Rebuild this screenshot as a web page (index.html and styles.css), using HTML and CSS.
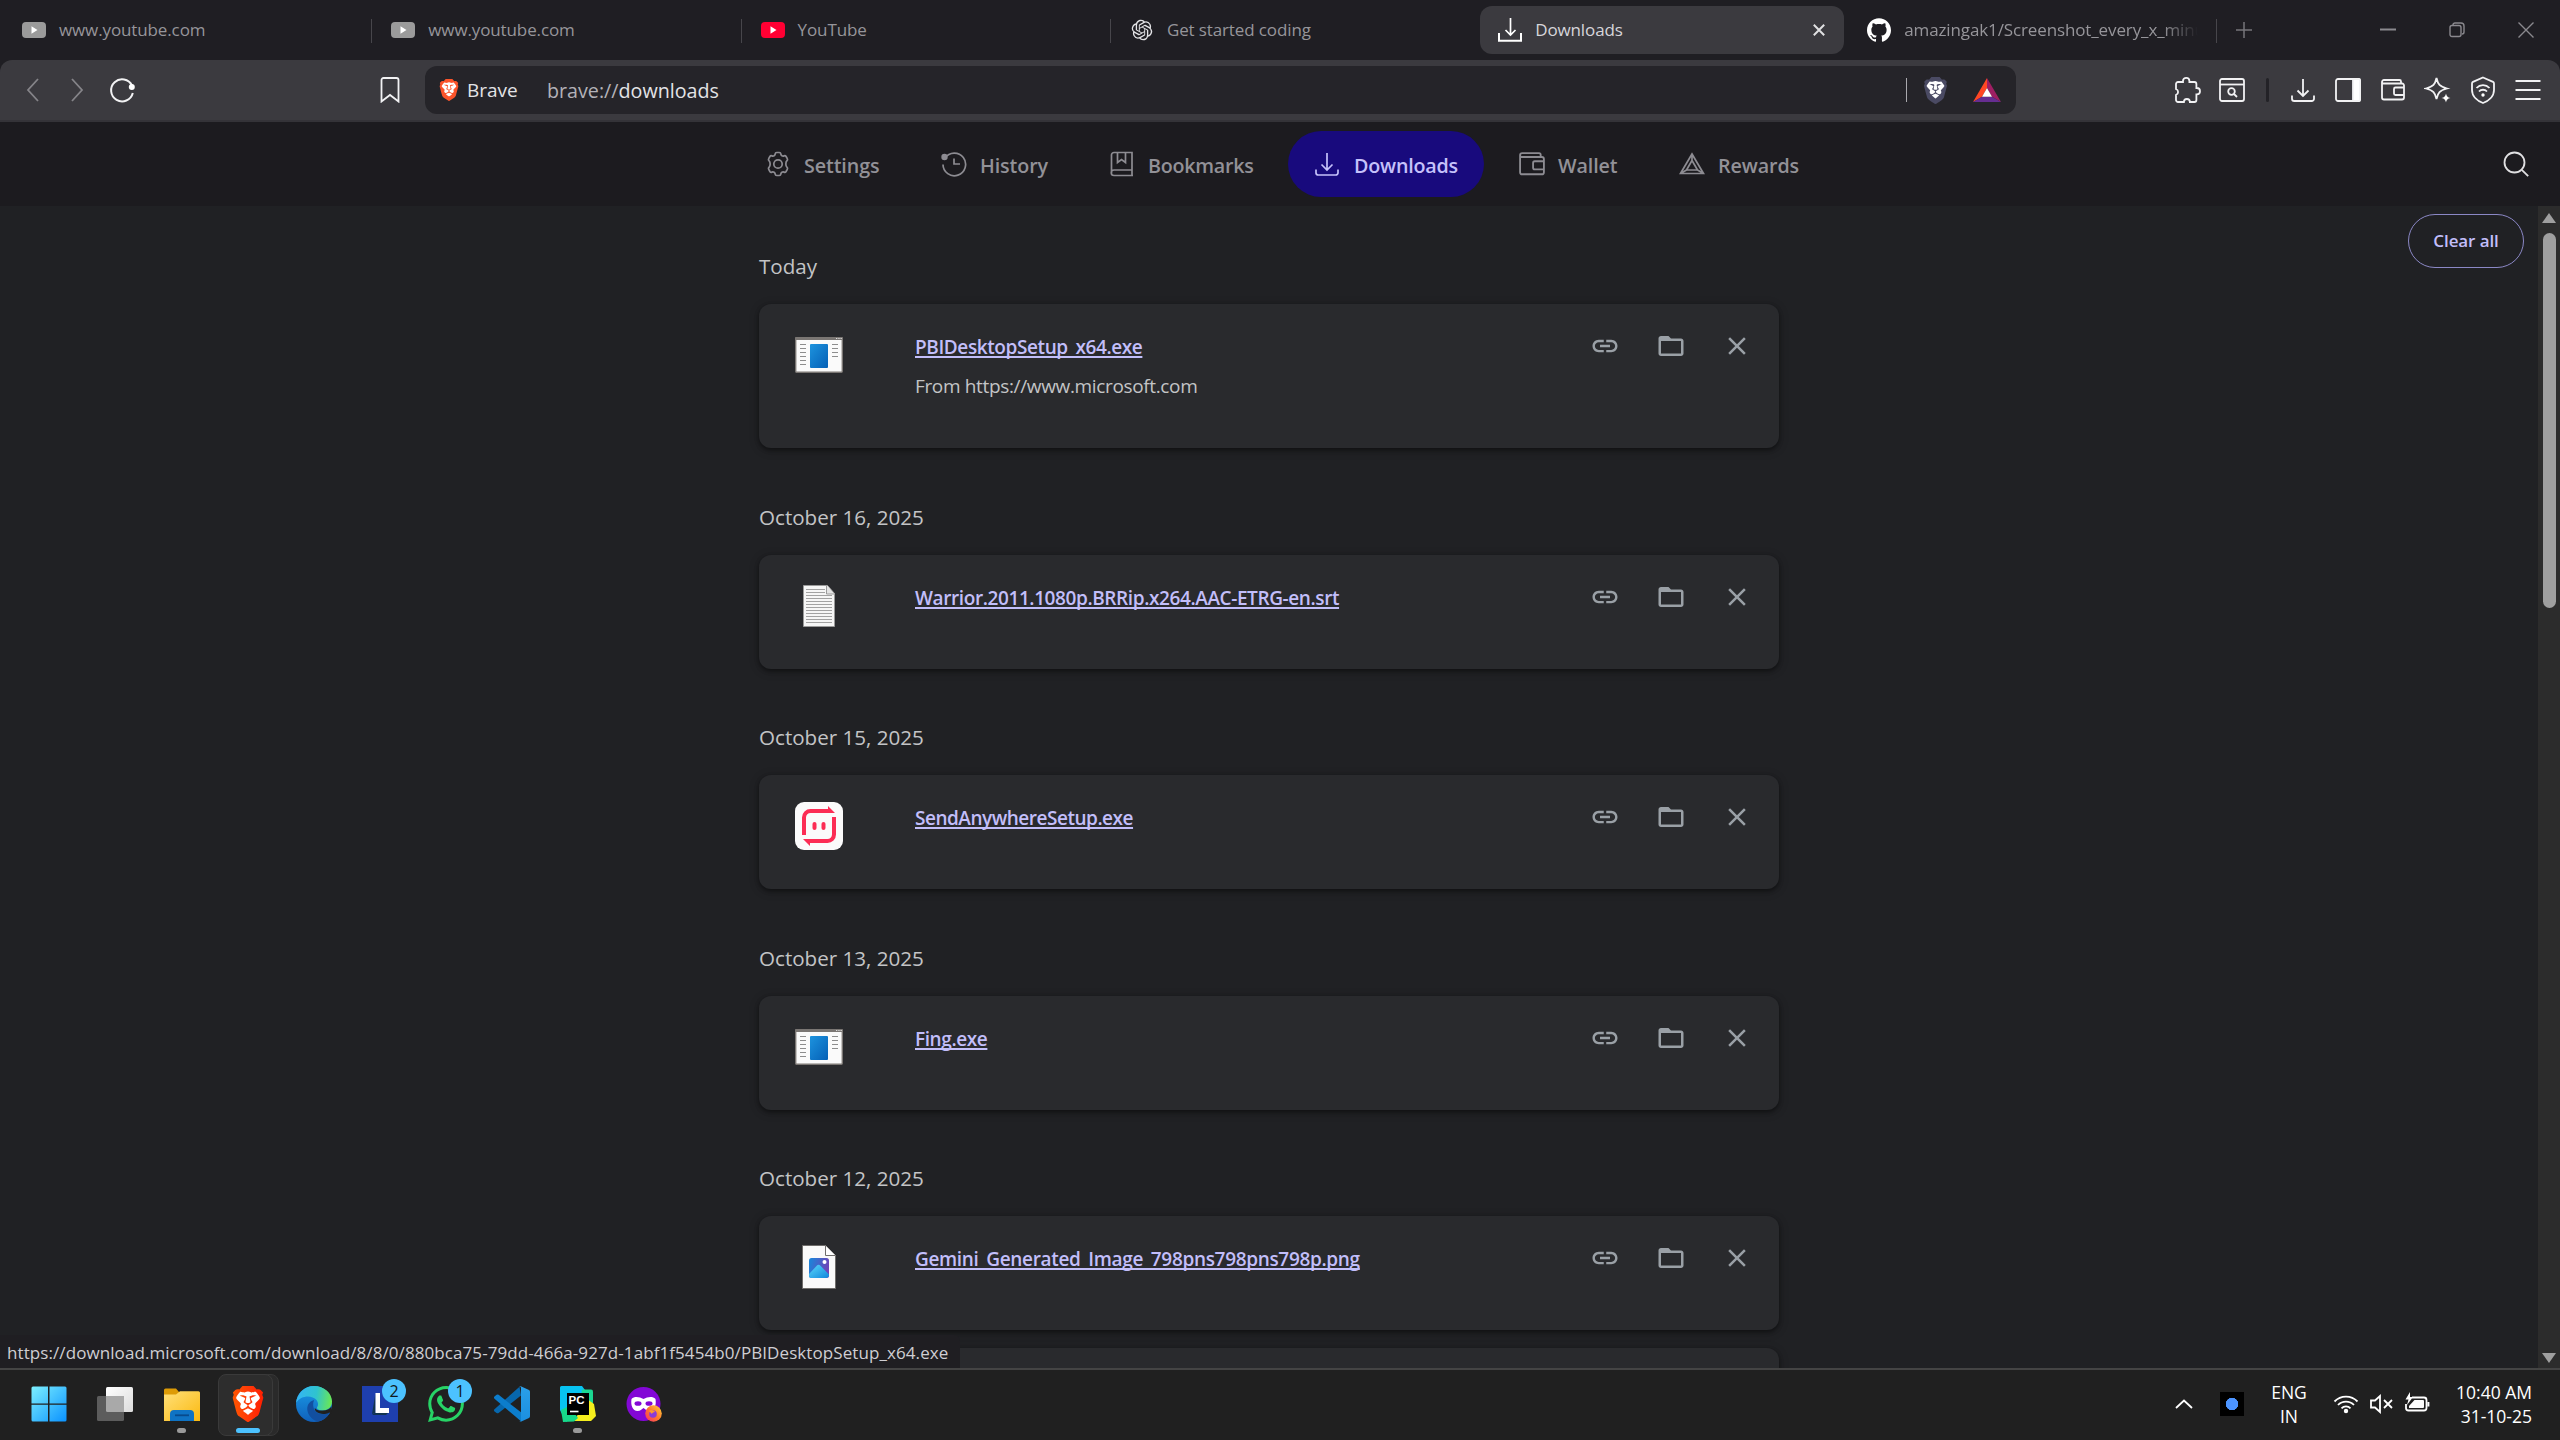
FILE: index.html
```html
<!DOCTYPE html>
<html lang="en">
<head>
<meta charset="utf-8">
<title>Downloads</title>
<link rel="stylesheet" href="styles.css">
</head>
<body>
<svg class="defs" width="0" height="0" aria-hidden="true">
  <defs>
    <linearGradient id="g-exe" x1="0" y1="0" x2="1" y2="1"><stop offset="0" stop-color="#1d93de"/><stop offset="1" stop-color="#0560b6"/></linearGradient>
    <linearGradient id="g-win" x1="0" y1="0" x2="1" y2="1"><stop offset="0" stop-color="#7df0ff"/><stop offset="1" stop-color="#0a92ff"/></linearGradient>
    <linearGradient id="g-tv" x1="0" y1="0" x2="1" y2="1"><stop offset="0" stop-color="#fff"/><stop offset="1" stop-color="#dcdcdc"/></linearGradient>
    <linearGradient id="g-folder" x1="0" y1="0" x2="1" y2="1"><stop offset="0" stop-color="#ffe07a"/><stop offset="1" stop-color="#fbb90f"/></linearGradient>
    <linearGradient id="g-brave" x1="0" y1="0" x2="1" y2="0"><stop offset="0" stop-color="#ff5601"/><stop offset=".6" stop-color="#ff3508"/><stop offset="1" stop-color="#ff1e00"/></linearGradient>
    <linearGradient id="g-edge1" x1="0" y1=".4" x2="1" y2=".5"><stop offset="0" stop-color="#35b5f5"/><stop offset=".55" stop-color="#2fc3cf"/><stop offset="1" stop-color="#6be852"/></linearGradient>
    <linearGradient id="g-edge2" x1="0" y1="0" x2="0" y2="1"><stop offset="0" stop-color="#1a9de8"/><stop offset="1" stop-color="#1060bb"/></linearGradient>
    <linearGradient id="g-img" x1="0" y1="0" x2="1" y2=".3"><stop offset="0" stop-color="#1688dc"/><stop offset="1" stop-color="#6d45b8"/></linearGradient>
    <linearGradient id="g-mtn" x1="0" y1="0" x2="1" y2="1"><stop offset="0" stop-color="#5ad7fa"/><stop offset="1" stop-color="#0f86dc"/></linearGradient>
    <linearGradient id="g-ff" x1="1" y1="0" x2="0" y2="1"><stop offset="0" stop-color="#ffd43a"/><stop offset=".5" stop-color="#ff7a2c"/><stop offset="1" stop-color="#f5286e"/></linearGradient>
    <linearGradient id="g-vs" x1="0" y1="0" x2="0" y2="1"><stop offset="0" stop-color="#2a9fe8"/><stop offset="1" stop-color="#1b8fe0"/></linearGradient>

    <symbol id="shield" viewBox="0 0 24 24"><path d="M15.68 0l2.096 2.38s1.84-.512 2.709.358c.868.87 1.584 1.638 1.584 1.638l-.562 1.381.715 2.047s-2.104 7.98-2.35 8.955c-.486 1.919-.818 2.66-2.198 3.633-1.38.972-3.884 2.66-4.293 2.916-.409.256-.92.692-1.38.692-.46 0-.97-.436-1.38-.692a185.796 185.796 0 01-4.293-2.916c-1.38-.973-1.712-1.714-2.197-3.633-.247-.975-2.351-8.955-2.351-8.955l.715-2.047-.562-1.381s.716-.768 1.585-1.638c.868-.87 2.708-.358 2.708-.358L8.321 0z"/><path fill="#fff" d="M12.001 14.936c-.14 0-1.038.317-1.758.69-.72.373-1.242.637-1.409.742-.167.104-.065.301.087.409.152.107 2.194 1.69 2.393 1.866.198.175.489.464.687.464.198 0 .49-.29.688-.464.198-.175 2.24-1.759 2.392-1.866.152-.108.254-.305.087-.41-.167-.104-.689-.368-1.41-.741-.72-.373-1.617-.69-1.757-.69zm0-11.278s-.409.001-1.022.206-1.278.46-1.584.46c-.307 0-2.581-.434-2.581-.434S4.119 7.152 4.119 7.849c0 .697.339.881.68 1.243l2.02 2.149c.192.203.59.511.356 1.066-.235.555-.58 1.26-.196 1.977.384.716 1.042 1.194 1.464 1.115.421-.08 1.412-.598 1.776-.834.364-.237 1.518-1.19 1.518-1.554 0-.365-1.193-1.02-1.413-1.168-.22-.15-1.226-.725-1.247-.95-.02-.227-.012-.293.284-.851.297-.559.831-1.304.742-1.8-.089-.495-.95-.753-1.565-.986-.615-.232-1.799-.671-1.947-.74-.148-.068-.11-.133.339-.175.448-.043 1.719-.212 2.292-.052.573.16 1.552.403 1.632.532.079.13.149.134.067.579-.081.445-.5 2.581-.541 2.96-.04.38-.12.63.288.724.409.094 1.097.256 1.333.256s.924-.162 1.333-.256c.408-.093.329-.344.288-.723-.04-.38-.46-2.516-.541-2.961-.082-.445-.012-.45.067-.579.08-.129 1.059-.372 1.632-.532.573-.16 1.845.009 2.292.052.449.042.487.107.339.175-.148.069-1.332.508-1.947.74-.615.233-1.476.49-1.565.986-.09.496.445 1.241.742 1.8.297.558.304.624.284.85-.02.226-1.026.802-1.247.95-.22.15-1.413.804-1.413 1.169 0 .364 1.154 1.317 1.518 1.554.364.236 1.355.755 1.776.834.422.079 1.08-.4 1.464-1.115.384-.716.039-1.422-.195-1.977-.235-.555.163-.863.355-1.066l2.02-2.149c.341-.362.68-.546.68-1.243 0-.697-2.695-3.96-2.695-3.96s-2.274.436-2.58.436c-.307 0-.972-.256-1.585-.461-.613-.205-1.022-.206-1.022-.206z"/></symbol>
    <symbol id="tube" viewBox="0 0 24 24"><rect x="0" y="4" width="24" height="16" rx="4"/><path d="M9.5 8.3v7.4l6-3.7z" fill="#fff"/></symbol>
    <symbol id="tray" viewBox="0 0 24 24"><path d="M12 1v17M6.5 12.5L12 18l5.5-5.5M1 17.500v3.200a2.300 2.300 0 0 0 2.300 2.300h17.400a2.300 2.300 0 0 0 2.300-2.300v-3.200"/></symbol>
    <symbol id="wallet" viewBox="0 0 24 24"><path d="M1 4v15.500a2 2 0 0 0 2 2h18a2 2 0 0 0 2-2V7.500a2 2 0 0 0-2-2H2.500A1.500 1.500 0 0 1 1 4a2 2 0 0 1 2-2h15.500a1.500 1.500 0 0 1 1.500 1.500v2M23 9.500h-8.500a1.500 1.500 0 0 0-1.500 1.500v4.500a1.500 1.500 0 0 0 1.500 1.500H23"/></symbol>
    <symbol id="link" viewBox="0 0 24 24"><path d="M3.900 12c0-1.710 1.390-3.100 3.100-3.100h4V7H7c-2.760 0-5 2.240-5 5s2.240 5 5 5h4v-1.900H7c-1.710 0-3.100-1.390-3.100-3.100zM8 13h8v-2H8v2zm9-6h-4v1.900h4c1.710 0 3.100 1.390 3.100 3.100s-1.390 3.100-3.100 3.100h-4V17h4c2.760 0 5-2.240 5-5s-2.240-5-5-5z"/></symbol>
    <symbol id="folder" viewBox="0 0 24 24"><path d="M20 6h-8l-2-2H4c-1.100 0-1.990.9-1.990 2L2 18c0 1.100.9 2 2 2h16c1.100 0 2-.9 2-2V8c0-1.100-.9-2-2-2zm0 12H4V8h16v10z"/></symbol>
    <symbol id="close" viewBox="0 0 24 24"><path d="M19 6.410L17.590 5 12 10.590 6.410 5 5 6.410 10.590 12 5 17.590 6.410 19 12 13.410 17.590 19 19 17.590 13.410 12z"/></symbol>
    <symbol id="exe" viewBox="0 0 48 48"><rect x=".7" y="6.700" width="46.600" height="34.600" rx="1" fill="#fafafa" stroke="#7a7673" stroke-width="1.400"/><path d="M0 9V7a1 1 0 0 1 1-1h46a1 1 0 0 1 1 1v2z" fill="#7a7673"/><path d="M41 7.500h1.300M43.300 7.500h1.300M45.500 7.500h1.300" stroke="#ddd"/><rect x="15" y="13" width="18" height="24" rx="1" fill="url(#g-exe)"/><path d="M5 13.500h6M5 17.500h6M5 21.500h6M5 25.500h6M5 29.500h6M5 33.500h6M37 13.500h6M37 17.500h6M37 21.500h6M37 25.500h6" stroke="#8d8d8d"/></symbol>
  </defs>
</svg>

<div class="screen">
  <header class="tabstrip">
    <div class="tab sep"><svg class="fav" fill="#9b9b9b"><use href="#tube"/></svg><span>www.youtube.com</span></div>
    <div class="tab sep"><svg class="fav" fill="#9b9b9b"><use href="#tube"/></svg><span>www.youtube.com</span></div>
    <div class="tab sep"><svg class="fav" fill="#ff0033"><use href="#tube"/></svg><span>YouTube</span></div>
    <div class="tab"><svg class="fav" viewBox="-2 -2 28 28" fill="#e3e3e6"><path d="M22.2819 9.8211a5.9847 5.9847 0 0 0-.5157-4.9108 6.0462 6.0462 0 0 0-6.5098-2.9A6.0651 6.0651 0 0 0 4.9807 4.1818a5.9847 5.9847 0 0 0-3.9977 2.9 6.0462 6.0462 0 0 0 .7427 7.0966 5.98 5.98 0 0 0 .511 4.9107 6.051 6.051 0 0 0 6.5146 2.9001A5.9847 5.9847 0 0 0 13.2599 24a6.0557 6.0557 0 0 0 5.7718-4.2058 5.9894 5.9894 0 0 0 3.9977-2.9001 6.0557 6.0557 0 0 0-.7475-7.0729zm-9.022 12.6081a4.4755 4.4755 0 0 1-2.8764-1.0408l.1419-.0804 4.7783-2.7582a.7948.7948 0 0 0 .3927-.6813v-6.7369l2.02 1.1686a.071.071 0 0 1 .038.052v5.5826a4.504 4.504 0 0 1-4.4945 4.4944zm-9.6607-4.1254a4.4708 4.4708 0 0 1-.5346-3.0137l.142.0852 4.783 2.7582a.7712.7712 0 0 0 .7806 0l5.8428-3.3685v2.3324a.0804.0804 0 0 1-.0332.0615L9.74 19.9502a4.4992 4.4992 0 0 1-6.1408-1.6464zM2.3408 7.8956a4.485 4.485 0 0 1 2.3655-1.9728V11.6a.7664.7664 0 0 0 .3879.6765l5.8144 3.3543-2.0201 1.1685a.0757.0757 0 0 1-.071 0l-4.8303-2.7865A4.504 4.504 0 0 1 2.3408 7.872zm16.5963 3.8558L13.1038 8.364 15.1192 7.2a.0757.0757 0 0 1 .071 0l4.8303 2.7913a4.4944 4.4944 0 0 1-.6765 8.1042v-5.6772a.79.79 0 0 0-.407-.667zm2.0107-3.0231l-.142-.0852-4.7735-2.7818a.7759.7759 0 0 0-.7854 0L9.409 9.2297V6.8974a.0662.0662 0 0 1 .0284-.0615l4.8303-2.7866a4.4992 4.4992 0 0 1 6.6802 4.66zM8.3065 12.863l-2.02-1.1638a.0804.0804 0 0 1-.038-.0567V6.0742a4.4992 4.4992 0 0 1 7.3757-3.4537l-.142.0805L8.704 5.459a.7948.7948 0 0 0-.3927.6813zm1.0976-2.3654l2.602-1.4998 2.6069 1.4998v2.9994l-2.5974 1.4997-2.6067-1.4997Z"/></svg><span>Get started coding</span></div>
    <div class="tab active"><svg class="fav" viewBox="0 0 24 24" fill="none" stroke="#fff"><path d="M12.500 0v17M7.500 12l5 5 5-5" stroke-width="1.700"/><path d="M1 15v7.700h22V15" stroke-width="2"/></svg><span>Downloads</span><svg class="tab-close" viewBox="0 0 12 12" stroke="#e0e0e2" stroke-width="2" fill="none"><path d="M.8.8l10.400 10.400M11.200.8L.8 11.200"/></svg></div>
    <div class="tab last sep"><svg class="fav" viewBox="0 0 24 24" fill="#fff"><path d="M12 .297c-6.630 0-12 5.373-12 12 0 5.303 3.438 9.800 8.205 11.385.6.113.82-.258.82-.577 0-.285-.01-1.040-.015-2.040-3.338.724-4.042-1.610-4.042-1.610C4.422 18.070 3.633 17.700 3.633 17.700c-1.087-.744.084-.729.084-.729 1.205.084 1.838 1.236 1.838 1.236 1.070 1.835 2.809 1.305 3.495.998.108-.776.417-1.305.76-1.605-2.665-.3-5.466-1.332-5.466-5.930 0-1.310.465-2.380 1.235-3.220-.135-.303-.54-1.523.105-3.176 0 0 1.005-.322 3.300 1.230.96-.267 1.980-.399 3-.405 1.020.006 2.040.138 3 .405 2.280-1.552 3.285-1.230 3.285-1.230.645 1.653.24 2.873.12 3.176.765.84 1.230 1.910 1.230 3.220 0 4.610-2.805 5.625-5.475 5.920.42.36.81 1.096.81 2.220 0 1.606-.015 2.896-.015 3.286 0 .315.21.69.825.57C20.565 22.092 24 17.592 24 12.297c0-6.627-5.373-12-12-12"/></svg><span class="fade">amazingak1/Screenshot_every_x_minu</span></div>
    <svg class="newtab" viewBox="0 0 16 16"><path d="M8 0v16M0 8h16"/></svg>
    <div class="winbtns">
      <svg viewBox="0 0 16 16"><path d="M0 7.500h16" stroke-width="2"/></svg>
      <svg viewBox="0 0 16 16"><rect x="1" y="3.500" width="11" height="11" rx="2"/><path d="M4 3.500V3a2 2 0 0 1 2-2h6a3 3 0 0 1 3 3v6a2 2 0 0 1-2 2"/></svg>
      <svg viewBox="0 0 16 16"><path d="M.5.5l15 15M15.500.5l-15 15"/></svg>
    </div>
  </header>

  <div class="toolbar">
    <div class="navbtns">
      <svg class="dim" width="14" height="24" viewBox="0 0 14 24"><path d="M12 1L2 12l10 11"/></svg>
      <svg class="dim" width="14" height="24" viewBox="0 0 14 24"><path d="M2 1l10 11L2 23"/></svg>
      <svg width="28" height="28" viewBox="0 0 28 28"><path d="M24 9.500a11 11 0 1 0 .8 7.500" stroke-width="2"/><circle cx="23.800" cy="11" r="3" fill="#fff" stroke="none"/></svg>
    </div>
    <svg class="bookmark" width="20" height="26" viewBox="0 0 20 26"><path d="M1.500 3a2 2 0 0 1 2-2h13a2 2 0 0 1 2 2v21.500L10 18l-8.500 6.500z" stroke-width="1.800"/></svg>
    <div class="address">
      <svg class="brand" fill="#fb542b" width="22" height="22"><use href="#shield"/></svg>
      <span class="site">Brave</span>
      <span class="url"><i>brave://</i>downloads</span>
      <i class="bar"></i>
      <svg fill="#4a4a63" width="27" height="27"><use href="#shield"/></svg>
      <svg class="bat" width="28" height="24" viewBox="0 0 28 24"><path d="M14 0L0 24l9-5.200L14 10z" fill="#ff4724"/><path d="M14 0v10l5 8.800 9 5.200z" fill="#9e1f63"/><path d="M0 24h28l-9-5.200H9z" fill="#662d91"/><path d="M14 10l-5 8.800h10z" fill="#fff"/></svg>
    </div>
    <div class="tools">
      <svg viewBox="0 0 28 28"><path d="M3 8a2 2 0 0 1 2-2h5V5a3.200 3.200 0 0 1 6.400 0v1h5a2 2 0 0 1 2 2v4h.4a3.200 3.200 0 0 1 0 6.400h-.4V24a2 2 0 0 1-2 2h-4.500a3 3 0 0 0-6 0H5a2 2 0 0 1-2-2v-5a3.200 3.200 0 0 0 0-6z"/></svg>
      <svg viewBox="0 0 28 28"><rect x="2" y="3" width="24" height="22" rx="2"/><path d="M2 8.500h24"/><circle cx="13.500" cy="15.500" r="3.300"/><path d="M16 18l3 3"/></svg>
      <i class="split"></i>
      <svg><use href="#tray" x="2" y="2" width="24" height="24"/></svg>
      <svg viewBox="0 0 28 28"><rect x="2" y="3" width="24" height="22" rx="2"/><path d="M19 3h6a1 1 0 0 1 1 1v20a1 1 0 0 1-1 1h-6z" fill="#fff"/></svg>
      <svg><use href="#wallet" x="2" y="2" width="24" height="24"/></svg>
      <svg viewBox="0 0 28 28"><path d="M12.500 2c1.500 6.500 3 8.500 10.500 10.500-7.500 2-9 4-10.500 10.500C11 16.500 9.500 14.500 2 12.500 9.500 10.500 11 8.500 12.500 2z"/><path d="M22 17.500c.7 3 1.500 3.800 4.500 4.500-3 .7-3.800 1.500-4.500 4.500-.7-3-1.500-3.800-4.500-4.500 3-.7 3.800-1.500 4.500-4.500z" fill="#fff" stroke="none"/></svg>
      <svg viewBox="0 0 28 28"><path d="M14 1.500l10 4.300a2 2 0 0 1 1 1.800V14c0 6.500-5.500 11-11 13C8.500 25 3 20.500 3 14V7.600a2 2 0 0 1 1-1.800z"/><path d="M7.500 12a9 9 0 0 1 13 0M10 15.500a5.500 5.500 0 0 1 8 0"/><circle cx="14" cy="19" r="1.700" fill="#fff" stroke="none"/></svg>
      <svg viewBox="0 0 28 28"><path d="M1.500 5h25M1.500 14h25M1.500 23h25" stroke-width="2.200"/></svg>
    </div>
  </div>

  <nav class="pagenav">
    <div class="links">
      <a class="n-settings"><svg viewBox="0 0 26 26"><path d="M10.200 2.900a1.600 1.600 0 0 1 1.500-1.400h2.600a1.600 1.600 0 0 1 1.500 1.400c.2 1.700 1.700 2.700 3.300 2a1.600 1.600 0 0 1 2 .6l1.200 2.200a1.600 1.600 0 0 1-.4 2.100c-1.400 1.100-1.400 5.300 0 6.400a1.600 1.600 0 0 1 .4 2.100l-1.200 2.200a1.600 1.600 0 0 1-2 .6c-1.600-.7-3.100.3-3.300 2a1.600 1.600 0 0 1-1.500 1.400h-2.600a1.600 1.600 0 0 1-1.500-1.400c-.2-1.700-1.700-2.700-3.300-2a1.600 1.600 0 0 1-2-.6l-1.200-2.200a1.600 1.600 0 0 1 .4-2.100c1.400-1.100 1.400-5.300 0-6.400a1.600 1.600 0 0 1-.4-2.100l1.200-2.200a1.600 1.600 0 0 1 2-.6c1.600.7 3.100-.3 3.300-2z"/><circle cx="13" cy="13" r="4.200"/></svg>Settings</a>
      <a class="n-history"><svg viewBox="0 0 26 26"><path d="M4 7a11.300 11.300 0 1 1-2 6.500M13 7.500V13h6"/><circle cx="3.500" cy="6" r="3.200" fill="#8d8c92" stroke="none"/></svg>History</a>
      <a class="n-bookmarks"><svg viewBox="0 0 26 26"><path d="M2.500 22V4A2.500 2.500 0 0 1 5 1.500h18V24M24 24.500H5a2.600 2.600 0 0 1 0-5.500h18M8.500 1.500v10l4-3 4 3v-10"/></svg>Bookmarks</a>
      <a class="n-downloads"><svg><use href="#tray" x="1" y="1" width="24" height="24"/></svg>Downloads</a>
      <a class="n-wallet"><svg viewBox="0 0 26 26"><use href="#wallet" width="26" height="26"/></svg>Wallet</a>
      <a class="n-rewards"><svg viewBox="0 0 26 26"><path d="M13 3L1.500 22.500h23z M13 9.500l-5.500 9.500h11z M13 3v6.500M1.500 22.500l6-3.500M24.500 22.500l-6-3.500"/></svg>Rewards</a>
    </div>
    <svg class="search" viewBox="0 0 26 26"><circle cx="11.500" cy="11.500" r="10"/><path d="M18.800 18.800l6.400 6.400"/></svg>
  </nav>

  <main class="page">
    <div class="list">
      <section>
        <h2>Today</h2>
        <article class="card tall">
          <svg class="file"><use href="#exe"/></svg>
          <div class="info"><a>PBIDesktopSetup_x64.exe</a><p>From https://www.microsoft.com</p></div>
          <div class="acts"><svg><use href="#link"/></svg><svg><use href="#folder"/></svg><svg><use href="#close"/></svg></div>
        </article>
      </section>
      <section>
        <h2>October 16, 2025</h2>
        <article class="card">
          <svg class="file" viewBox="0 0 48 48"><path d="M8.500 3.500h24l7 8v33h-31z" fill="#f6f6f6" stroke="#9a9a9a"/><path d="M31.500 3.500v8.500h8" fill="#e4e4e4" stroke="#9a9a9a"/><path d="M11 7.500h19M11 10.500h19M11 13.500h26M11 16.500h26M11 19.500h26M11 22.500h26M11 25.500h26M11 28.500h26M11 31.500h26M11 34.500h26M11 37.500h26M11 40.500h26" stroke="#a2a2a2"/></svg>
          <div class="info"><a>Warrior.2011.1080p.BRRip.x264.AAC-ETRG-en.srt</a></div>
          <div class="acts"><svg><use href="#link"/></svg><svg><use href="#folder"/></svg><svg><use href="#close"/></svg></div>
        </article>
      </section>
      <section>
        <h2>October 15, 2025</h2>
        <article class="card">
          <svg class="file" viewBox="0 0 48 48"><rect width="48" height="48" rx="9" fill="#fbfbfb"/><g fill="none" stroke="#fc2d55" stroke-width="4"><path d="M9 33V15.500A6.500 6.500 0 0 1 15.500 9H35"/><path d="M39 15v17.500a6.500 6.500 0 0 1-6.500 6.500H13"/></g><path d="M33 4l7 7h-7zM15 44l-7-7h7z" fill="#fc2d55"/><rect x="17.500" y="20" width="4" height="8" rx="2" fill="#fc2d55"/><rect x="26.500" y="20" width="4" height="8" rx="2" fill="#fc2d55"/></svg>
          <div class="info"><a class="narrow">SendAnywhereSetup.exe</a></div>
          <div class="acts"><svg><use href="#link"/></svg><svg><use href="#folder"/></svg><svg><use href="#close"/></svg></div>
        </article>
      </section>
      <section>
        <h2>October 13, 2025</h2>
        <article class="card">
          <svg class="file"><use href="#exe"/></svg>
          <div class="info"><a>Fing.exe</a></div>
          <div class="acts"><svg><use href="#link"/></svg><svg><use href="#folder"/></svg><svg><use href="#close"/></svg></div>
        </article>
      </section>
      <section>
        <h2>October 12, 2025</h2>
        <article class="card">
          <svg class="file" viewBox="0 0 48 48"><path d="M7.500 2.500h23l10 10v33h-33z" fill="#fafafa" stroke="#6f6d6b"/><path d="M30.500 2.500v10h10" fill="#fff" stroke="#6f6d6b"/><rect x="14" y="15" width="20" height="20" rx="2.500" fill="url(#g-img)"/><path d="M14 31l7.500-8a2.800 2.800 0 0 1 4.200 0L34 31.500a3 3 0 0 1-2.500 3.500h-15A2.500 2.500 0 0 1 14 32.500z" fill="url(#g-mtn)"/><circle cx="29.500" cy="19" r="2" fill="#fff"/></svg>
          <div class="info"><a class="wide">Gemini_Generated_Image_798pns798pns798p.png</a></div>
          <div class="acts"><svg><use href="#link"/></svg><svg><use href="#folder"/></svg><svg><use href="#close"/></svg></div>
        </article>
        <article class="card next"></article>
      </section>
    </div>
    <button class="clear">Clear all</button>
    <div class="scroll"><i class="up"></i><i class="thumb"></i><i class="down"></i></div>
    <div class="status">https://download.microsoft.com/download/8/8/0/880bca75-79dd-466a-927d-1abf1f5454b0/PBIDesktopSetup_x64.exe</div>
  </main>

  <footer class="taskbar">
    <div class="apps">
      <div class="app start"><svg viewBox="0 0 36 36"><path fill="url(#g-win)" d="M2 .5h15v17H.500V2A1.500 1.500 0 0 1 2 .500zM18.500.5H34A1.500 1.500 0 0 1 35.500 2v15.500h-17zM.5 18.800H17V35.500H2A1.500 1.500 0 0 1 .5 34zM18.500 18.800h17V34a1.500 1.500 0 0 1-1.500 1.500H18.500z"/></svg></div>
      <div class="app"><svg viewBox="0 0 36 36"><rect x="9" y="1" width="27" height="25" rx="1.500" fill="url(#g-tv)"/><rect x="0" y="10" width="27" height="25" rx="1.500" fill="#5c5c5c"/><path d="M9 10h18v16H10.500A1.500 1.500 0 0 1 9 24.500z" fill="#a9a9a9"/></svg></div>
      <div class="app"><svg viewBox="0 0 36 36"><path d="M0 4a1.500 1.500 0 0 1 1.500-1.500h10.500L15 6v7H0z" fill="#dd9b06"/><path d="M0 8.500h12l4-3.200h18.500A1.500 1.500 0 0 1 36 6.800V35H0z" fill="url(#g-folder)"/><path d="M6 35V28a4 4 0 0 1 4-4h16a4 4 0 0 1 4 4v7z" fill="#0f73c4"/><path d="M11 29.300h14" stroke="#084a8c" stroke-width="1.800"/></svg><i class="dot"></i></div>
      <div class="app current"><svg viewBox="0 0 24 24" fill="url(#g-brave)"><use href="#shield"/></svg><i class="dot wide"></i></div>
      <div class="app"><svg viewBox="0 0 36 36"><circle cx="18" cy="18" r="18" fill="url(#g-edge2)"/><path d="M0 17C1 7 9 0 18 0c10 0 18 7 18 15.500 0 5.500-4 9-9 9-4 0-6.500-1.500-6-3 1.500-2 1.500-5-.5-7.500C16 9 5 9 0 17z" fill="url(#g-edge1)"/><path d="M18 14c-5 1.500-7.500 5.500-6.500 11 1.300 6 6.500 10 11 10.500C27 34.500 31 31.500 33.500 27.500c.5-1-.3-1.300-1-.8-5 2.500-10.500 1.500-13.500-2-2-2.500-2.500-7-1-10.700z" fill="#124fa0"/><path d="M33.500 26.500c-5 2.500-10.500 1.700-13.500-1-.8-1-1.300-2-1.200-3.500 1 1.700 4 2.800 8 2.600 4-.1 7-1.600 8.600-4.200L36 29z" fill="#202020"/></svg></div>
      <div class="app"><svg viewBox="0 0 36 36"><rect width="36" height="36" fill="#1e3fae"/><path d="M13.500 7L10 28l3.500-1z" fill="#12344f"/><path d="M13.500 26.500L10 29h14l2.500-2.500z" fill="#12344f"/><path d="M13.500 7H18v15h9v5H13.500z" fill="#fff"/></svg><b class="badge">2</b></div>
      <div class="app"><svg viewBox="0 0 24 24" fill="#27d366"><path d="M17.472 14.382c-.297-.149-1.758-.867-2.030-.967-.273-.099-.471-.148-.67.15-.197.297-.767.966-.94 1.164-.173.199-.347.223-.644.075-.297-.15-1.255-.463-2.390-1.475-.883-.788-1.480-1.761-1.653-2.059-.173-.297-.018-.458.13-.606.134-.133.298-.347.446-.52.149-.174.198-.298.298-.497.099-.198.05-.371-.025-.52-.075-.149-.669-1.612-.916-2.207-.242-.579-.487-.5-.669-.51-.173-.008-.371-.01-.57-.01-.198 0-.52.074-.792.372-.272.297-1.040 1.016-1.040 2.479 0 1.462 1.065 2.875 1.213 3.074.149.198 2.096 3.200 5.077 4.487.709.306 1.262.489 1.694.625.712.227 1.360.195 1.871.118.571-.085 1.758-.719 2.006-1.413.248-.694.248-1.289.173-1.413-.074-.124-.272-.198-.57-.347m-5.421 7.403h-.004a9.870 9.870 0 01-5.031-1.378l-.361-.214-3.741.982.998-3.648-.235-.374a9.860 9.860 0 01-1.510-5.260c.001-5.450 4.436-9.884 9.888-9.884 2.640 0 5.122 1.030 6.988 2.898a9.825 9.825 0 012.893 6.994c-.003 5.450-4.437 9.884-9.885 9.884m8.413-18.297A11.815 11.815 0 0012.050 0C5.495 0 .16 5.335.157 11.892c0 2.096.547 4.142 1.588 5.945L.057 24l6.305-1.654a11.882 11.882 0 005.683 1.448h.005c6.554 0 11.890-5.335 11.893-11.893a11.821 11.821 0 00-3.480-8.413z"/></svg><b class="badge">1</b></div>
      <div class="app"><svg viewBox="0 0 36 36"><path d="M.5 25.500c-.8-.7-.7-1.500 0-2.200L25.500.7 27 9.500 4.600 27a1.700 1.700 0 0 1-2 0z" fill="#0767ad"/><path d="M.5 12.700c-.8-.7-.7-1.500 0-2.200l2.100-1.700a1.700 1.700 0 0 1 2 0L27 26.300v9z" fill="#0c7dcc"/><path d="M25.500.4a2 2 0 0 1 1.800 0L35 4a2 2 0 0 1 1 1.700v24.600a2 2 0 0 1-1 1.700l-7.700 3.600a2 2 0 0 1-2.200-.4c.8.7 1.900.1 1.900-1V2c0-1.200-1-1.800-1.900-1z" fill="url(#g-vs)"/></svg></div>
      <div class="app"><svg viewBox="0 0 36 36"><path d="M0 1.500A1.500 1.500 0 0 1 1.500 0H22l3 4v16L6 36 0 24z" fill="#07c3f2"/><path d="M22 3.500h9a2 2 0 0 1 2 2V18H20z" fill="#1bd892"/><path d="M27 13l7 5 2 12-5 5-17 0 6-10z" fill="#f5ee1d"/><path d="M1 24l8-4 9 12-4 3.500L3 36z" fill="#17d98a"/><rect x="7" y="7" width="22" height="22" fill="#000"/><path d="M10 25.500h8.500" stroke="#fff" stroke-width="1.600"/><text x="8.600" y="18" class="pc">PC</text></svg><i class="dot"></i></div>
      <div class="app"><svg viewBox="0 0 36 36"><circle cx="17.500" cy="18" r="17" fill="#8307d6"/><path d="M5.500 13c3-3 8-2 12 0 4-2 9-3 12 0 1 6-1 12-6 12-3 0-4-2-6-3-2 1-3 3-6 3-5 0-7-6-6-12z" fill="#fff"/><ellipse cx="12" cy="17.500" rx="3.500" ry="2.300" fill="#8307d6"/><ellipse cx="23" cy="17.500" rx="3.500" ry="2.300" fill="#8307d6"/><circle cx="27.500" cy="27.500" r="8.300" fill="url(#g-ff)"/><circle cx="27" cy="28" r="3.800" fill="#8a3bd8"/><path d="M23 25c2-2 5-1 6 1-2 0-3 1-3 2z" fill="#ff9a2c"/></svg></div>
    </div>
    <div class="systray">
      <svg class="chev" width="18" height="10" viewBox="0 0 18 10"><path d="M1 9l8-7.500L17 9"/></svg>
      <span class="rec"></span>
      <span class="lang">ENG<br>IN</span>
      <svg class="wifi" width="26" height="20" viewBox="0 0 26 20"><path d="M1.500 7.500a16 16 0 0 1 23 0M5 11a11 11 0 0 1 16 0M8.500 14.300a6.300 6.300 0 0 1 9 0"/><circle cx="13" cy="17" r="2.200" fill="#fff" stroke="none"/></svg>
      <svg class="vol" width="26" height="20" viewBox="0 0 26 20"><path d="M2 6.500h4L11 2v16l-5-4.500H2zM15 6l8 8M23 6l-8 8"/></svg>
      <svg class="batt" width="26" height="22" viewBox="0 0 26 22"><path d="M8 5.500h12a2.500 2.500 0 0 1 2.500 2.500v8a2.500 2.500 0 0 1-2.500 2.500H4.500A2.500 2.500 0 0 1 2 16v-4M24.500 10v4.500"/><path d="M10.500 8H19a1 1 0 0 1 1 1v6a1 1 0 0 1-1 1H5v-2z" fill="#fff" stroke="none"/><path d="M6 0L1.500 7.500h3L3 13l6-8H6z" fill="#fff" stroke="none"/></svg>
      <span class="clock">10:40 AM<br>31-10-25</span>
    </div>
  </footer>
</div>
</body>
</html>
```
FILE: styles.css
```css
* { box-sizing: border-box; }
body { margin: 0; background: #202124; font-family: "Open Sans", "Noto Sans", sans-serif; color: #e3e3e6; }
.defs { position: absolute; }
svg { display: block; flex: none; }
i { font-style: normal; }
.screen { width: 2560px; height: 1440px; display: flex; flex-direction: column; overflow: hidden; background: #1f1e23; }

/* Tab strip */
.tabstrip { height: 60px; flex: none; display: flex; align-items: center; padding-left: 3px; }
.tab { width: 369.300px; height: 48px; padding: 0 19px; display: flex; align-items: center; gap: 13px; font-size: 17px; letter-spacing: -.12px; color: #96959a; white-space: nowrap; position: relative; border-radius: 12px; }
.tab span { padding-bottom: 2px; }
.tab.sep::after { content: ""; position: absolute; right: 0; top: 13px; width: 1px; height: 24px; background: #47464b; }
.fav { width: 24px; height: 24px; }
.tab.active { width: 364px; margin-right: 4px; background: #3b3a3f; color: #d6d5da; padding-left: 18px; }
.tab-close { width: 12px; height: 12px; margin-left: auto; }
.fade { width: 298px; overflow: hidden; -webkit-mask-image: linear-gradient(90deg, #000 88%, transparent); mask-image: linear-gradient(90deg, #000 88%, transparent); }
.newtab { width: 16px; height: 16px; margin-left: 19px; stroke: #77767b; stroke-width: 1.500; }
.winbtns { margin-left: auto; padding-right: 26px; display: flex; gap: 53px; }
.winbtns svg { width: 16px; height: 16px; fill: none; stroke: #8a898e; stroke-width: 1.400; }

/* Toolbar */
.toolbar { height: 62px; flex: none; display: flex; align-items: center; background: #3b3a3f; border-bottom: 2px solid #343338; border-radius: 12px 12px 0 0; padding: 0 18px 0 26px; }
.navbtns, .tools { display: flex; align-items: center; }
.navbtns { width: 354px; gap: 30px; }
.navbtns svg:last-child { margin-left: -6px; }
.navbtns svg, .bookmark, .tools svg { fill: none; stroke: #f2f2f4; stroke-width: 1.800; }
.navbtns .dim { stroke: #858489; }
.address { margin-left: 25px; width: 1591px; height: 48px; border-radius: 12px; background: #252429; display: flex; align-items: center; padding: 0 15px 0 13px; font-size: 19px; }
.site { margin-left: 7px; width: 80px; }
.url { flex: 1; font-size: 19.700px; }
.url i { color: #b3b2b8; }
.bar { width: 1px; height: 24px; background: #aaa9ae; margin-right: 15px; }
.bat { margin-left: 24px; }
.tools { margin-left: auto; gap: 17px; }
.tools svg { width: 28px; height: 28px; }
.split { width: 3px; height: 24px; background: #232227; margin: 0 3px; border-radius: 2px; }

/* Page navigation */
.pagenav { height: 84px; flex: none; display: flex; align-items: center; background: #1c1b1f; padding: 0 31px 0 745px; }
.links { flex: 1; display: flex; }
.links a { height: 66px; padding: 2px 20px 0; display: flex; align-items: center; font-size: 19.700px; font-weight: 600; letter-spacing: -.1px; color: #929197; }
.links svg { width: 26px; height: 26px; margin: -2px 13px 0 0; fill: none; stroke: #8d8c92; stroke-width: 1.700; }
.n-settings { width: 176px; }
.n-history { width: 168px; }
.n-bookmarks { width: 199px; }
.links .n-downloads { width: 196px; padding-left: 26px; background: #180a7d; border-radius: 33px; color: #c5c1fb; margin-right: 15px; letter-spacing: -.2px; }
.links .n-bookmarks { letter-spacing: -.25px; }
.links .n-downloads svg { stroke: #c5c1fb; margin-right: 14px; }
.links .n-wallet { width: 160px; }
.search { width: 26px; height: 26px; fill: none; stroke: #e0e0e2; stroke-width: 1.800; }

/* Download list */
.page { flex: 1; min-height: 0; position: relative; overflow: hidden; background: #202124; padding: 45px 0 0 759px; }
.list { width: 1020px; }
section + section { margin-top: 53.500px; }
h2 { margin: 0 0 23px; font-size: 20.600px; font-weight: 400; line-height: 30px; color: #c3c4c6; }
.card { height: 114px; border-radius: 12px; background: #292a2d; box-shadow: 0 2px 4px rgba(0,0,0,.4), 0 2px 8px 2px rgba(0,0,0,.16); display: flex; padding: 23px 27px 0 36px; }
.card.tall { height: 144px; }
.card.next { margin-top: 18px; }
.file { width: 48px; height: 48px; margin: 4px 72px 0 0; }
.info { flex: 1; padding-top: 1px; font-size: 19px; line-height: 39px; letter-spacing: -.4px; }
.info a { color: #c2befa; font-weight: 600; text-decoration: underline; text-decoration-thickness: 1.500px; text-underline-offset: 2px; text-decoration-skip-ink: none; }
.info .narrow { letter-spacing: -.48px; }
.info .wide { letter-spacing: -.33px; }
.info p { margin: 0; color: #c3c4c6; letter-spacing: -.35px; }
.acts { display: flex; gap: 36px; padding-top: 4px; }
.acts svg { width: 30px; height: 30px; fill: #9aa0a6; }

.clear { position: absolute; left: 2408px; top: 8px; width: 116px; height: 54px; border: 1.500px solid #8b88c6; border-radius: 27px; background: transparent; color: #c2befa; font: 600 17px "Open Sans", sans-serif; letter-spacing: -.1px; padding: 0 0 2px; }
.scroll { position: absolute; right: 0; top: 0; bottom: 0; width: 22px; background: #2c2c2c; display: flex; flex-direction: column; align-items: center; padding: 7px 0 5px; }
.up, .down { border: 7px solid transparent; }
.up { border-top: 0; border-bottom: 10px solid #9f9f9f; }
.down { border-bottom: 0; border-top: 10px solid #9f9f9f; margin-top: auto; }
.thumb { width: 13px; height: 375px; margin-top: 10px; border-radius: 7px; background: #9f9f9f; }
.status { position: absolute; left: 0; bottom: 0; width: 960px; height: 33px; padding-left: 7px; background: #1f1e22; border-top-right-radius: 6px; font-size: 17px; line-height: 35px; letter-spacing: .085px; color: #cfced3; white-space: nowrap; }

/* Taskbar */
.taskbar { height: 72px; flex: none; border-top: 2px solid #444; background: #202020; display: flex; justify-content: space-between; }
.apps { display: flex; padding-left: 16px; }
.app { width: 66.100px; height: 70px; position: relative; display: flex; align-items: center; justify-content: center; }
.app svg { width: 36px; height: 36px; margin-top: -2px; position: relative; }
.app:nth-child(n+3) { left: .5px; }
.dot { position: absolute; left: 28px; top: 58px; width: 9px; height: 5px; border-radius: 3px; background: #9a9a9a; }
.dot.wide { left: 21px; width: 24px; background: #4cc2ff; }
.current::before, .current::after { content: ""; position: absolute; top: 4px; height: 60px; border-radius: 8px; }
.current::before { left: 10px; width: 52px; background: #2a2a2a; border: 1.500px solid #363636; }
.current::after { left: 3px; width: 53px; background: #2d2d2d; border: 1.500px solid #3a3a3a; }
.current svg, .current .dot { z-index: 1; }
.badge { position: absolute; left: 35px; top: 9px; width: 24px; height: 24px; border-radius: 50%; background: #4cc2ff; color: #101820; font-size: 16px; font-weight: 400; line-height: 24px; text-align: center; }
.pc { font: 700 11.500px "Liberation Sans", sans-serif; fill: #fff; }
.systray { display: flex; align-items: center; padding: 0 28px 2px 0; color: #fff; font-size: 17.500px; line-height: 24px; }
.systray svg { fill: none; stroke: #fff; stroke-width: 1.800; }
.chev { margin-right: 27px; }
.rec { width: 24px; height: 24px; background: radial-gradient(circle, #4c94ff 6px, #000 6.500px); margin-right: 27px; }
.lang { width: 36px; text-align: center; margin-right: 26px; }
.wifi { margin-right: 10px; }
.vol { margin-right: 9px; }
.batt { margin: -3px 18px 0 0; }
.clock { width: 84px; text-align: right; }
```
